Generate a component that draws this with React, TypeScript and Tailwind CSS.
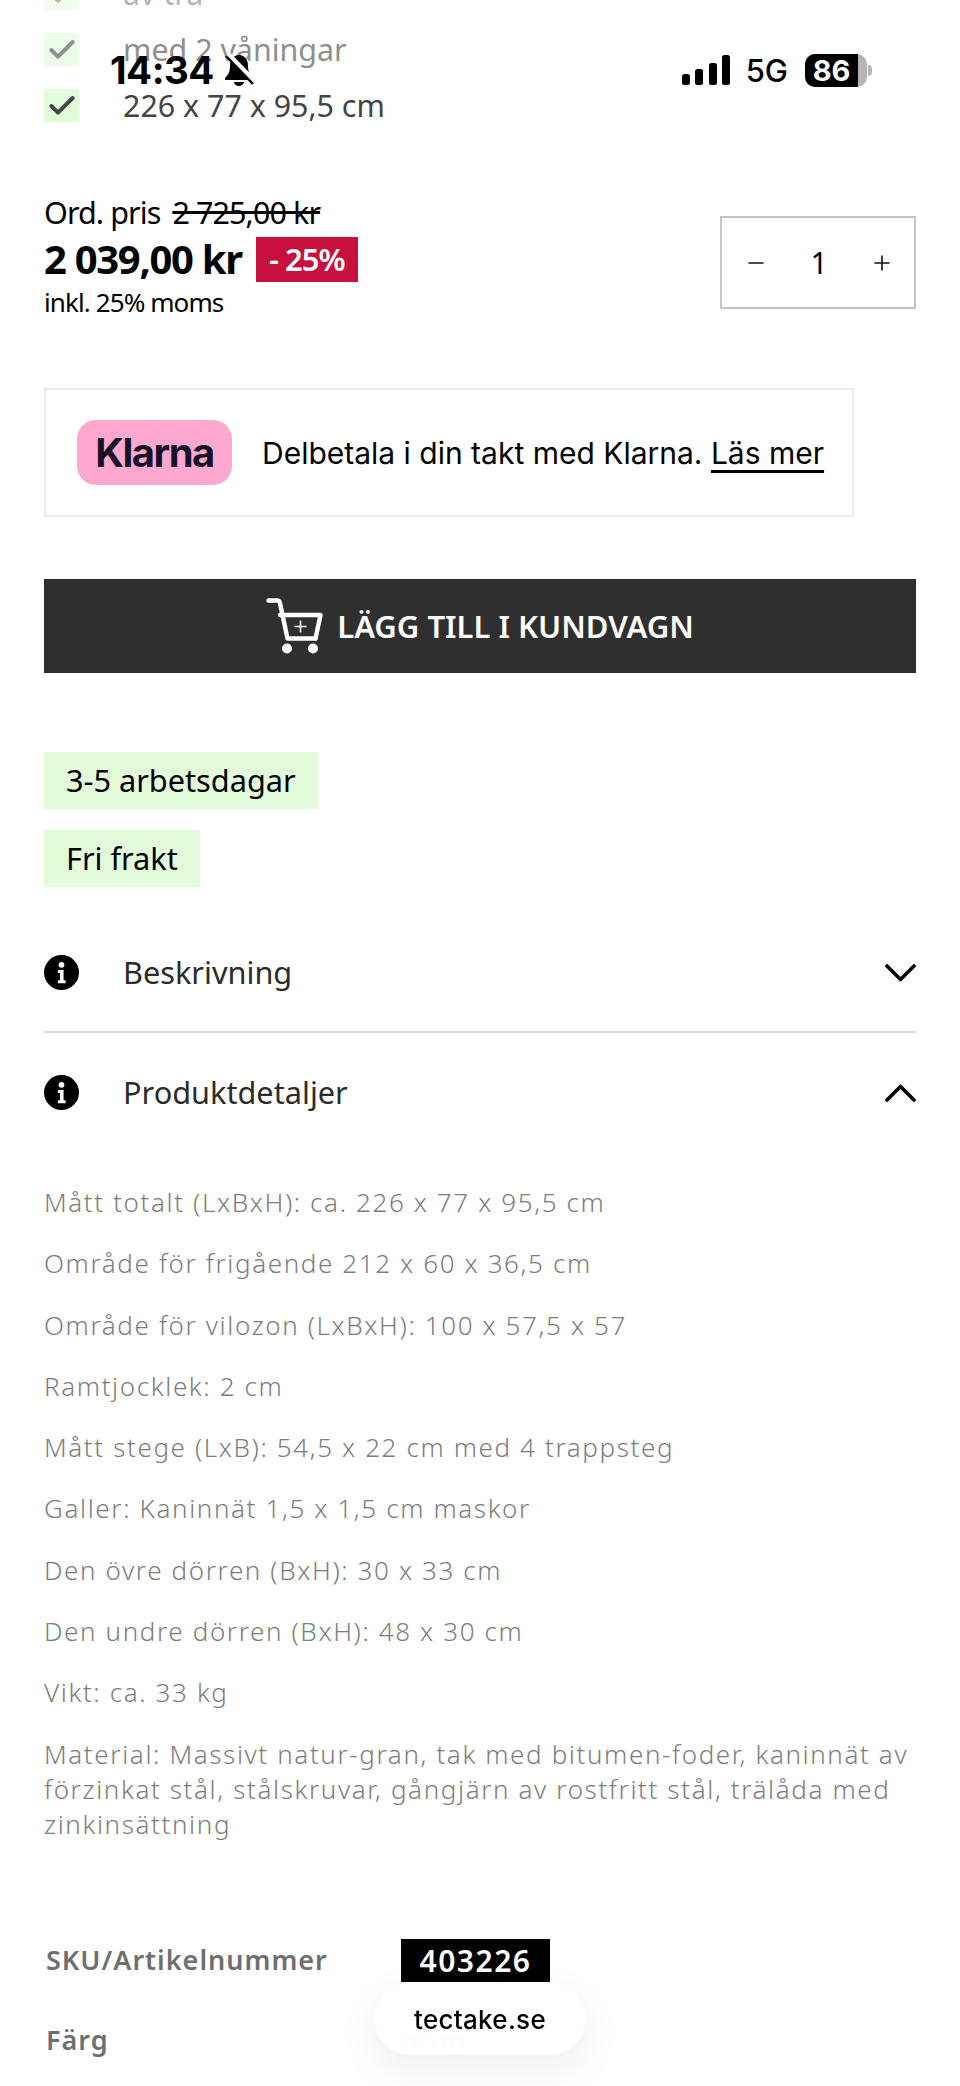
import React from 'react';
import { Check, Minus, Plus } from 'lucide-react';

const DETAILS = [
  'Mått totalt (LxBxH): ca. 226 x 77 x 95,5 cm',
  'Område för frigående 212 x 60 x 36,5 cm',
  'Område för vilozon (LxBxH): 100 x 57,5 x 57',
  'Ramtjocklek: 2 cm',
  'Mått stege (LxB): 54,5 x 22 cm med 4 trappsteg',
  'Galler: Kaninnät 1,5 x 1,5 cm maskor',
  'Den övre dörren (BxH): 30 x 33 cm',
  'Den undre dörren (BxH): 48 x 30 cm',
  'Vikt: ca. 33 kg',
];

const InfoIcon = () => (
  <svg viewBox="0 0 34 34" className="w-[35px] h-[35px] shrink-0">
    <circle cx="17" cy="17" r="17" fill="#000" />
    <circle cx="17" cy="9.5" r="2.8" fill="#fff" />
    <path d="M13.5 14.5h5.5v10h2v3h-7.5v-3h2v-7h-2z" fill="#fff" />
  </svg>
);

const CartIcon = () => (
  <svg viewBox="0 0 57 56" className="w-[57px] h-[56px] shrink-0" fill="none" stroke="#fff">
    <path d="M2.5 2.5h9c1.5 0 2 .8 2.4 2.2L21.5 40.5h28" strokeWidth="4.4" strokeLinecap="round" strokeLinejoin="round" />
    <path d="M14 17h40.5l-5 23.5" strokeWidth="4.4" strokeLinecap="round" strokeLinejoin="round" />
    <path d="M34.5 22.5v12M28.5 28.5h12" strokeWidth="1.6" />
    <circle cx="21" cy="50.5" r="5" fill="#fff" stroke="none" />
    <circle cx="47" cy="50.5" r="5" fill="#fff" stroke="none" />
  </svg>
);

const Chevron = ({ open }: { open: boolean }) => (
  <svg viewBox="0 0 31 18" className="w-[31px] h-[18px] shrink-0" fill="none" stroke="#000" strokeWidth="3.6" strokeLinecap="round" strokeLinejoin="round">
    <polyline points={open ? '2,16 15.5,2.5 29,16' : '2,2 15.5,15.5 29,2'} />
  </svg>
);

const StatusBar = () => (
  <div className="absolute top-[45px] left-[110px] right-[88px] h-[50px] flex items-center justify-between">
    <div className="flex items-center">
      <span className="font-['Inter',sans-serif] font-bold text-[38.5px] leading-[50px] tracking-[-0.5px] text-black">14:34</span>
      <svg viewBox="0 0 32 34" className="w-[32px] h-[34px] ml-[9px]">
        <path d="M16 2c-6 0-9 5-9 11 0 6-2 9-5 12v2h28v-2c-3-3-5-6-5-12 0-6-3-11-9-11z" fill="#000" />
        <path d="M11 29h10a5 4 0 0 1-10 0z" fill="#000" />
        <path d="M5 1l27 28" stroke="#fff" strokeWidth="5" />
        <path d="M3 3l27 28" stroke="#000" strokeWidth="2.5" />
      </svg>
    </div>
    <div className="flex items-center">
      <svg viewBox="0 0 48 30" className="w-[48px] h-[30px] mr-[16px]">
        <rect x="0" y="19" width="8" height="11" rx="2.5" fill="#000" />
        <rect x="13" y="14" width="8" height="16" rx="2.5" fill="#000" />
        <rect x="27" y="8" width="8" height="22" rx="2.5" fill="#000" />
        <rect x="40" y="0" width="8" height="30" rx="2.5" fill="#000" />
      </svg>
      <span className="font-['Inter',sans-serif] font-medium text-[31px] leading-none text-black mr-[17px]">5G</span>
      <div className="relative w-[62px] h-[33px] rounded-[10px] bg-[#b5b5b5] overflow-hidden">
        <div className="w-[53px] h-full bg-black flex items-center justify-center">
          <span className="font-['Inter',sans-serif] font-bold text-[29px] leading-none text-white">86</span>
        </div>
      </div>
      <div className="w-[4px] h-[11px] rounded-r-full bg-[#b5b5b5] ml-[1px]" />
    </div>
  </div>
);

const FeatureRow = ({ label, className }: { label: string; className: string }) => (
  <div className={`flex items-center h-[33px] ${className}`}>
    <div className="w-[35px] h-[33px] bg-[#e2fbd9] flex items-center justify-center shrink-0">
      <Check size={32} strokeWidth={3} color="#3f4a44" />
    </div>
    <span className="ml-[44px] text-[30.4px] leading-[33px] text-[#444]">{label}</span>
  </div>
);

const AccordionRow = ({ label, open }: { label: string; open: boolean }) => (
  <div className="flex items-center h-[35px]">
    <InfoIcon />
    <span className="ml-[44px] flex-1 text-[30.7px] leading-[35px] text-[#2b2b2b]">{label}</span>
    <Chevron open={open} />
  </div>
);

export default function App() {
  return (
    <div className="relative w-[960px] h-[2086px] overflow-hidden bg-white font-['Noto_Sans',sans-serif] text-black">
      <div className="px-[44px] -mt-[23px]">
        <div className="flex flex-col gap-[23px]">
          <FeatureRow label="av trä" className="opacity-40" />
          <FeatureRow label="med 2 våningar" className="opacity-60" />
          <FeatureRow label="226 x 77 x 95,5 cm" className="" />
        </div>

        <div className="flex items-start justify-between mt-[71px]">
          <div>
            <div className="flex items-center h-[40px] text-[30.5px] tracking-[-0.9px]">
              <span>Ord. pris</span>
              <span className="ml-[12px] line-through">2 725,00 kr</span>
            </div>
            <div className="flex items-center h-[46px] mt-[3px]">
              <span className="text-[40px] leading-[46px] font-bold tracking-[-1.3px]">2 039,00 kr</span>
              <span className="ml-[14px] w-[102px] h-[45px] bg-[#c8103e] text-white text-[31px] font-semibold tracking-[-1px] flex items-center justify-center">- 25%</span>
            </div>
            <div className="mt-[4px] text-[26px] leading-[32px] tracking-[-0.9px]">inkl. 25% moms</div>
          </div>
          <div className="w-[196px] h-[93px] mt-[23px] border-2 border-[#c4c4c4] flex items-center justify-between pl-[22px] pr-[20px]">
            <Minus size={24} strokeWidth={1.6} color="#111" />
            <span className="text-[30px] leading-none">1</span>
            <Plus size={24} strokeWidth={1.6} color="#111" />
          </div>
        </div>

        <div className="w-[810px] h-[129px] mt-[70px] border-2 border-[#ececec] flex items-center pl-[31px]">
          <div className="w-[155px] h-[65px] rounded-[19px] bg-[#ffa8cd] flex items-center justify-center">
            <span className="font-['Inter',sans-serif] font-bold text-[40px] leading-none tracking-[-1.5px] text-[#17102a]">Klarna</span>
          </div>
          <span className="ml-[30px] font-['Inter',sans-serif] text-[30px] leading-[40px] whitespace-nowrap">
            Delbetala i din takt med Klarna. <span className="underline underline-offset-[6px]">Läs mer</span>
          </span>
        </div>

        <div className="h-[94px] mt-[62px] bg-[#2f2f2f] flex items-center justify-center gap-[14px]">
          <CartIcon />
          <span className="text-[31px] font-semibold text-white">LÄGG TILL I KUNDVAGN</span>
        </div>

        <div className="mt-[79px] flex flex-col items-start gap-[21px]">
          <div className="h-[57px] px-[22px] bg-[#e2fbd9] flex items-center text-[30.7px]">3-5 arbetsdagar</div>
          <div className="h-[57px] px-[22px] bg-[#e2fbd9] flex items-center text-[30.7px]">Fri frakt</div>
        </div>

        <div className="mt-[68px]">
          <AccordionRow label="Beskrivning" open={false} />
          <div className="h-[2px] bg-[#dcdcdc] mt-[41px] mb-[42px]" />
          <AccordionRow label="Produktdetaljer" open />
        </div>

        <div className="mt-[75px] text-[26px] leading-[35px] font-light tracking-[1.62px] text-[#7d7d7d]">
          <div className="flex flex-col gap-[26.3px]">
            {DETAILS.map((row) => (
              <p key={row}>{row}</p>
            ))}
            <p>Material: Massivt natur-gran, tak med bitumen-foder, kaninnät av förzinkat stål, stålskruvar, gångjärn av rostfritt stål, trälåda med zinkinsättning</p>
          </div>
        </div>

        <div className="mt-[97px] pl-[2px] flex flex-col gap-[37px] text-[27px] font-semibold tracking-[1px] text-[#6f6f6f]">
          <div className="flex items-center h-[43px]">
            <span className="w-[355px]">SKU/Artikelnummer</span>
            <span className="w-[149px] h-[43px] bg-black text-white text-[30px] tracking-[1.5px] flex items-center justify-center">403226</span>
          </div>
          <div className="flex items-center h-[43px]">
            <span className="w-[355px]">Färg</span>
            <span className="font-normal text-[#8a8a8a]">brun</span>
          </div>
        </div>
      </div>

      <StatusBar />

      <div className="absolute left-[375px] top-[1983px] w-[210px] h-[72px] rounded-[36px] bg-white/[0.96] backdrop-blur-[2px] shadow-[0_14px_44px_rgba(0,0,0,0.07)] flex items-center justify-center">
        <span className="font-['Inter',sans-serif] font-medium text-[26px] tracking-[0.3px] text-black">tectake.se</span>
      </div>
    </div>
  );
}
